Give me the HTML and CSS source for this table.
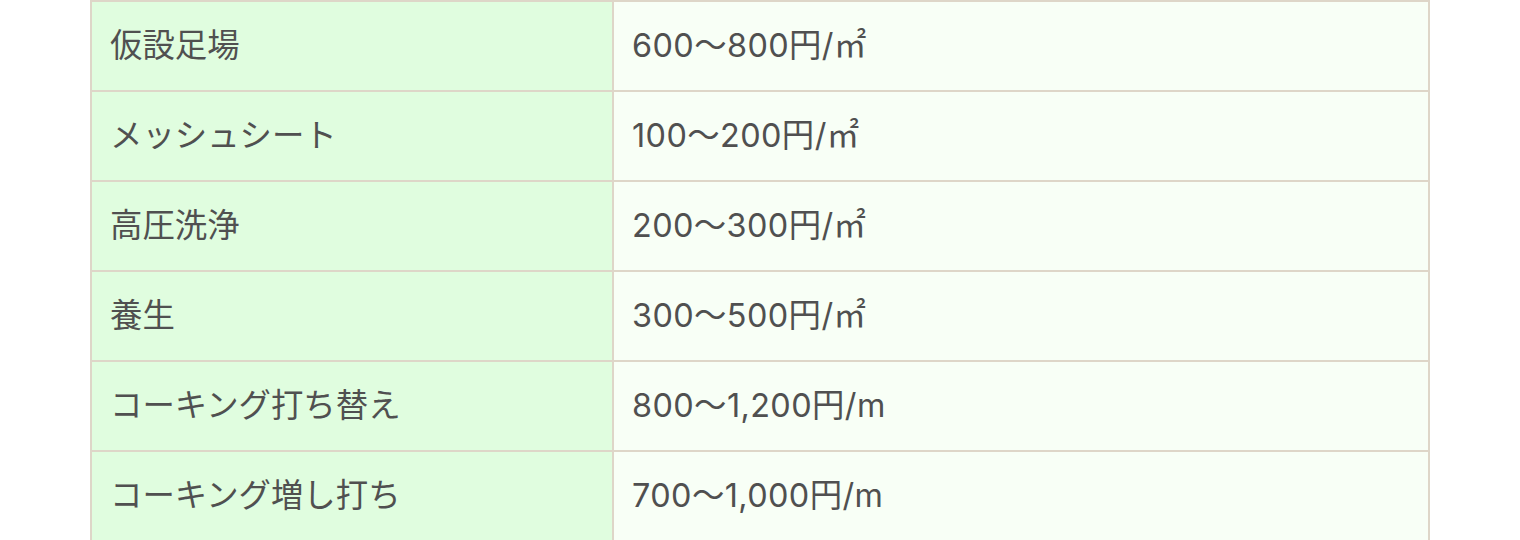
FILE: index.html
```html
<!DOCTYPE html>
<html lang="ja">
<head>
  <meta charset="UTF-8">
  <title>外壁塗装 単価表</title>
  <link rel="stylesheet" href="styles.css">
</head>
<body>
  <table class="price-table">
    <tr>
      <th>仮設足場</th>
      <td>600～800円/㎡</td>
    </tr>
    <tr>
      <th>メッシュシート</th>
      <td>100～200円/㎡</td>
    </tr>
    <tr>
      <th>高圧洗浄</th>
      <td>200～300円/㎡</td>
    </tr>
    <tr>
      <th>養生</th>
      <td>300～500円/㎡</td>
    </tr>
    <tr>
      <th>コーキング打ち替え</th>
      <td>800～1,200円/m</td>
    </tr>
    <tr>
      <th>コーキング増し打ち</th>
      <td>700～1,000円/m</td>
    </tr>
  </table>
</body>
</html>
```

FILE: styles.css
```css
body {
  margin: 0;
  background-color: #fff;
  font-family: Inter, "Noto Sans CJK JP", sans-serif;
  color: #505050;
}

.price-table {
  border-collapse: collapse;
  margin-left: 90px;
  width: 1340px;
  font-size: 32.4px;
  line-height: 1.2;
}

.price-table th,
.price-table td {
  border: 2px solid #ded6c8;
  height: 88px;
  padding: 0 18px;
  text-align: left;
  vertical-align: middle;
  font-weight: normal;
}

.price-table th {
  width: 484px;
  background-color: #e0fddf;
}

.price-table td {
  background-color: #f8fff6;
  letter-spacing: 0.4px;
}
```
